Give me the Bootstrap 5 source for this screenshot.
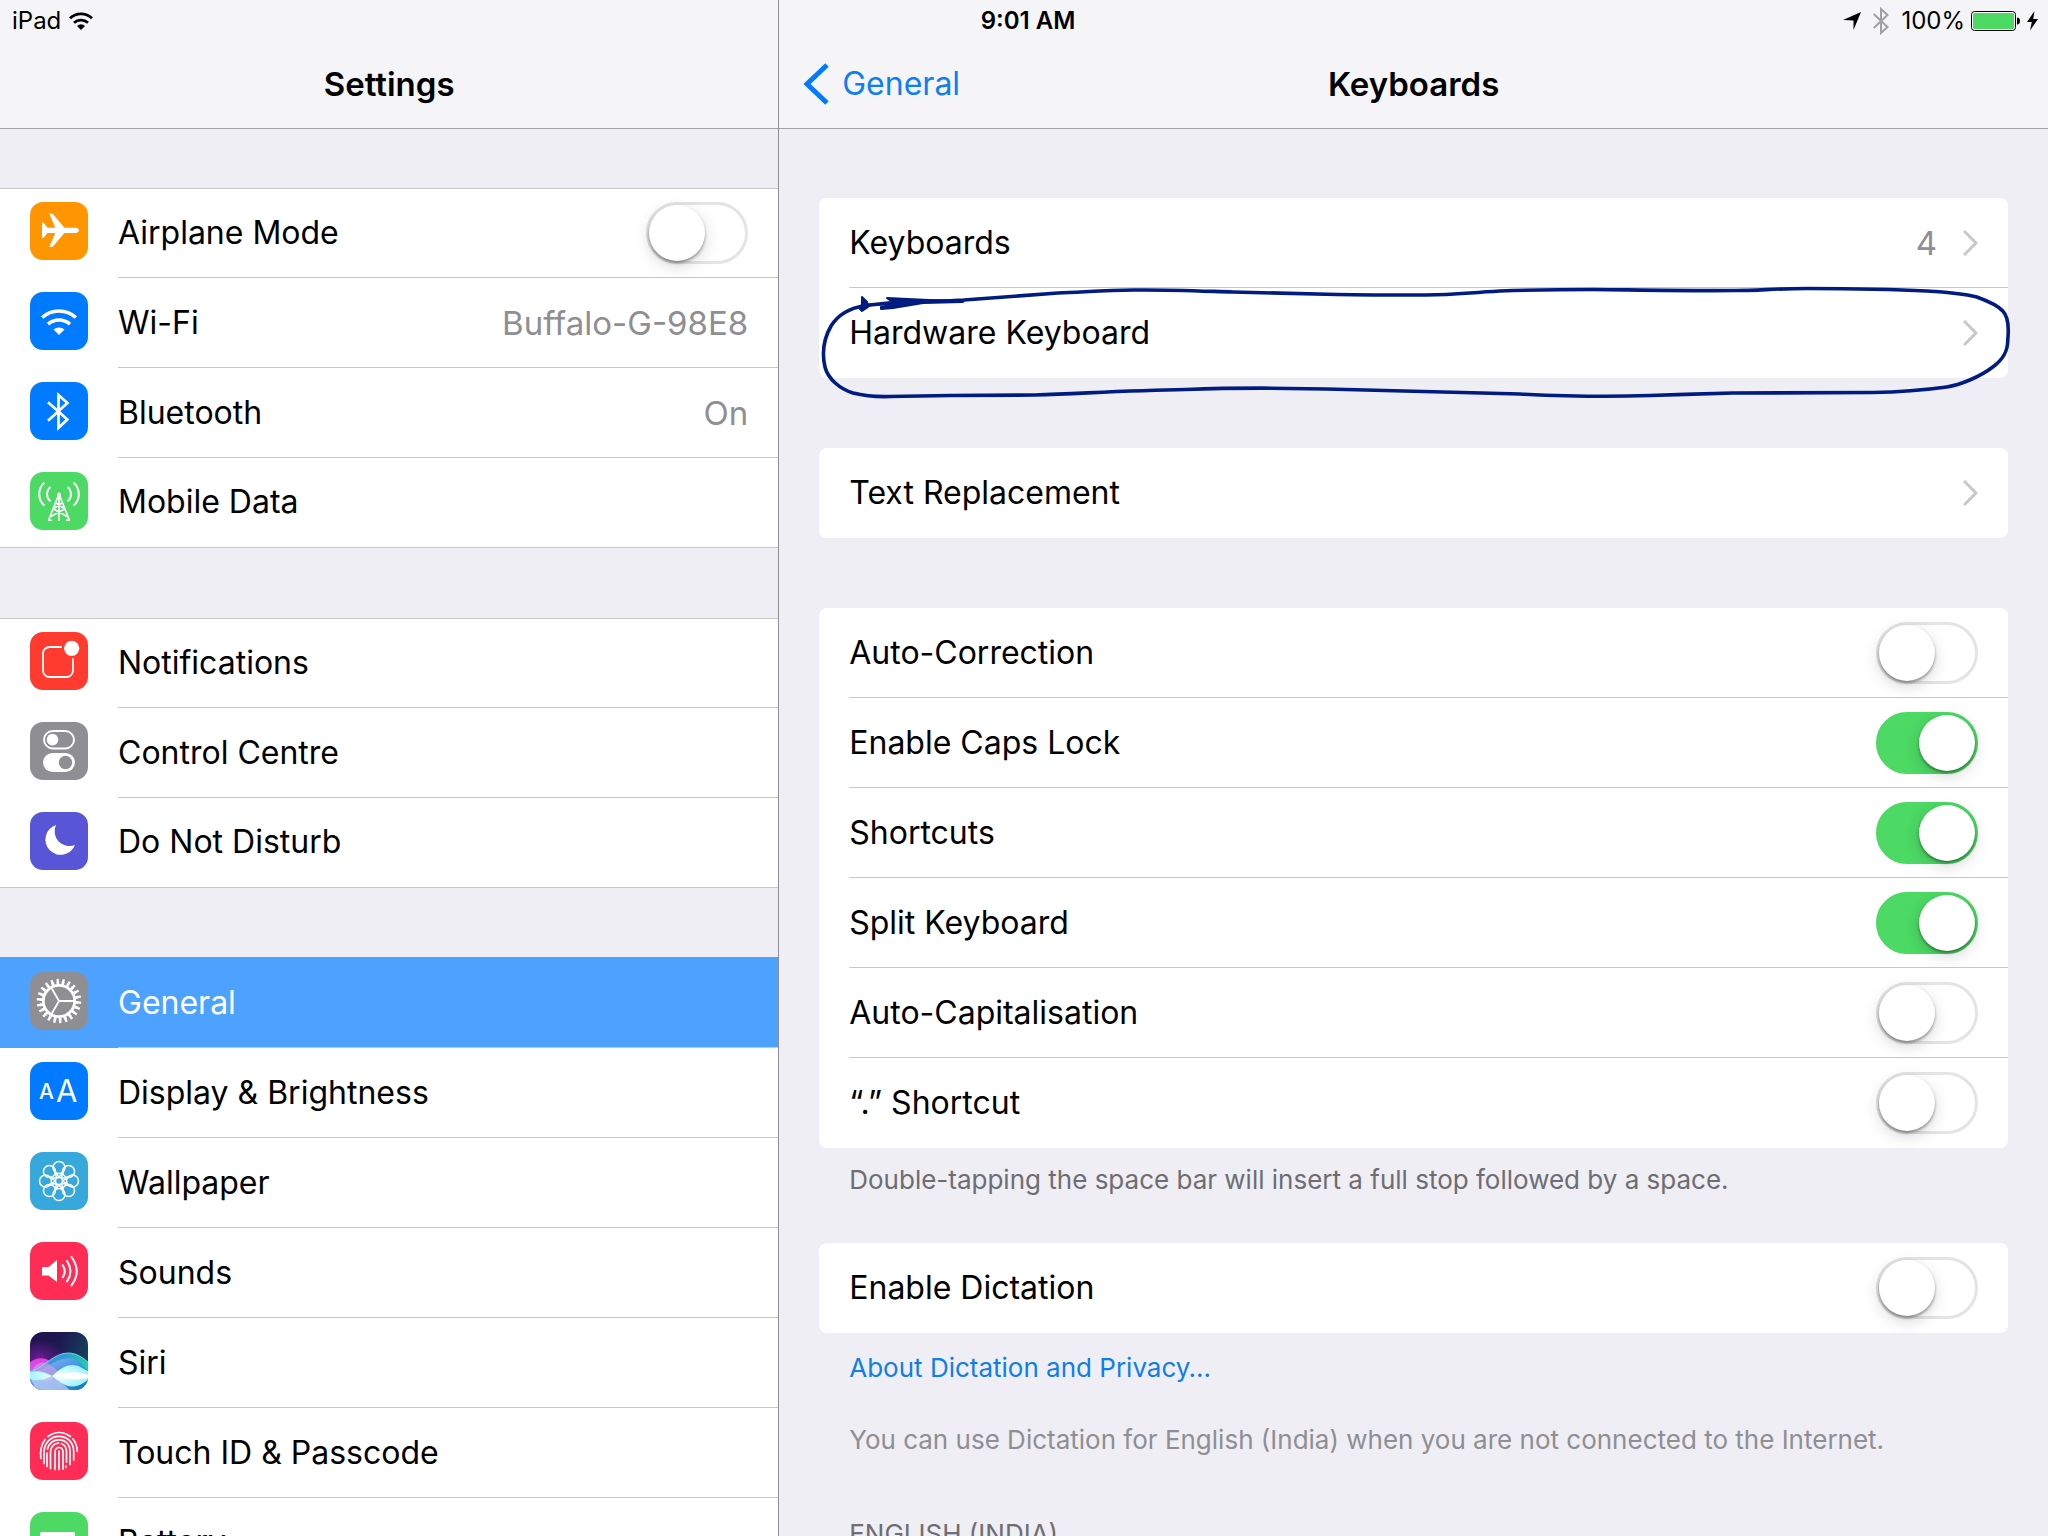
<!DOCTYPE html>
<html lang="en-GB">
<head>
<meta charset="utf-8">
<meta name="viewport" content="width=device-width, initial-scale=1">
<title>Settings – Keyboards</title>
<link href="https://cdn.jsdelivr.net/npm/bootstrap@5.3.0/dist/css/bootstrap.min.css" rel="stylesheet">
<style>
  :root { --line: #c8c7cc; --bar-line: #a1a1a8; --page: #efeef4; --grey: #8e8e93; --blue: #007aff; --green: #4cd964; }
  body { font-family: Inter, "Liberation Sans", sans-serif; font-size: 32px; line-height: 40px; color: #000; background: var(--page); }
  a { text-decoration: none; }

  .status-strip { height: 42px; padding: 0 10px 0 12px; font-size: 24px; line-height: 42px; z-index: 2; }
  .status-side { flex: 1 1 0; }
  .status-time { padding-left: 6px; }
  .status-icons { gap: 12px; }
  .power { gap: 6px; }

  .side-pane { flex: 0 0 calc(38% + 1px); border-right: 1px solid #8f8e94; }
  .title-bar { height: 129px; padding: 40px 24px 0; background: #f5f5f7; border-bottom: 1px solid var(--bar-line); }
  .title-bar h1 { font-size: 33px; line-height: 40px; }
  .title-bar .title-side { flex: 1 1 0; }
  .back-link { display: flex; gap: 12px; color: #0f7ef0; }

  .side-pane .list-group { margin-bottom: 70px; border-top: 1px solid var(--line); border-bottom: 1px solid var(--line); }
  .side-lists { padding-top: 59px; }
  .option { height: 90px; padding: 0 0 0 30px; border: 0; color: #000; background: #fff; display: flex; gap: 30px; }
  .option-body { border-bottom: 1px solid var(--line); padding-right: 30px; }
  .side-pane .option:first-child { height: 89px; }
  .side-pane .option:last-child { height: 89px; }
  .option:last-child .option-body { border-bottom-color: transparent; }
  .side-pane .list-group.no-top { border-top-color: #4da1ff; box-shadow: 0 -1px #4da1ff; }
  .option.active { background: #4da1ff; color: #fff; margin: 0; }
  .option.active .option-body { border-bottom-color: #a9d0ff; }
  .app-tile { width: 58px; height: 58px; flex: none; margin-top: 14px; border-radius: 13px; overflow: hidden; }
  .side-pane .option:first-child .app-tile { margin-top: 13px; }
  .muted { color: var(--grey); }
  .option .muted { font-size: 33px; }

  .card-lists { padding: 69px 40px 0; }
  .option-card { border: 0; border-radius: 9px; position: relative; }
  .next { width: 15px; height: 26px; margin-left: 26px; }
  .gap-large { margin-bottom: 70px; }
  .note { font-size: 26px; line-height: 31px; padding: 16px 0 0 30px; margin: 0; }
  .note-dark { color: #6d6d72; }
  .note-link { padding-top: 19px; }
  .note-link a { color: #0f7ee6; }
  .note-after { padding-top: 41px; }
  .note-heading { padding-top: 63px; }
  .ink { left: 0; top: 0; width: 100%; height: 100%; overflow: visible; pointer-events: none; z-index: 3; }

  .toggle.form-check-input { width: 102px; height: 62px; margin: 0; float: none; position: relative; border: 3px solid #e4e4e4; border-radius: 31px; background: #fff; box-shadow: none; flex: none; }
  .toggle.form-check-input::before { content: ""; position: absolute; left: 0; top: 0; width: 56px; height: 56px; border-radius: 50%; background: #fff; box-shadow: 0 2px 3px rgba(0,0,0,.38), 0 5px 16px rgba(0,0,0,.16); }
  .toggle.form-check-input:checked { background: var(--green); border-color: var(--green); }
  .toggle.form-check-input:checked::before { left: 40px; }
</style>
<script src="https://cdn.jsdelivr.net/npm/bootstrap@5.3.0/dist/js/bootstrap.bundle.min.js"></script>
</head>
<body class="vh-100 overflow-hidden position-relative">

<div class="status-strip position-absolute top-0 start-0 end-0 d-flex align-items-center">
  <div class="status-side d-flex align-items-center">
    <span>iPad</span>
    <svg class="ms-2" width="24" height="18" viewBox="0 0 24 18" aria-hidden="true">
      <path d="M1 6.2A16 16 0 0 1 23 6.2M5 10.8A10.5 10.5 0 0 1 19 10.8" fill="none" stroke="#000" stroke-width="2.8"/>
      <path d="M12 18 8 13.9a5.800 5.800 0 0 1 8 0z"/>
    </svg>
  </div>
  <span class="status-time fw-semibold">9:01 AM</span>
  <div class="status-side d-flex align-items-center justify-content-end status-icons">
    <svg width="18" height="18" viewBox="0 0 18 18" aria-hidden="true"><path d="M18 0 10.500 18V8.400L0 8z"/></svg>
    <svg width="16" height="28" viewBox="0 0 16 28" aria-hidden="true"><path d="M.8 7 14.500 20 8 26V2l6.500 6L.8 21" fill="none" stroke="#a0a0a3" stroke-width="2"/></svg>
    <div class="d-flex align-items-center power">
      <span>100%</span>
      <svg width="50" height="20" viewBox="0 0 50 20" aria-hidden="true">
        <rect x=".5" y=".5" width="44" height="19" rx="3" fill="#fff" stroke="#000"/>
        <rect x="2" y="2" width="41" height="16" rx="1.500" fill="#4cd964"/>
        <path d="M46 6.500c2 0 3 1.500 3 3.500s-1 3.500-3 3.500z"/>
      </svg>
      <svg width="11" height="20" viewBox="0 0 11 20" aria-hidden="true"><path d="M7.500 0 0 11h4.800L3 19.500 11 8H6.200z"/></svg>
    </div>
  </div>
</div>

<div class="d-flex h-100">
  <nav class="side-pane d-flex flex-column overflow-hidden" aria-label="Settings">
    <header class="title-bar d-flex align-items-center justify-content-center flex-shrink-0">
      <h1 class="fw-semibold m-0">Settings</h1>
    </header>
    <div class="side-lists">
      <div class="list-group list-group-flush">
        <div class="list-group-item option">
          <svg class="app-tile" viewBox="0 0 58 58" aria-hidden="true"><rect width="58" height="58" fill="#ff9500"/>
            <path fill="#fff" d="M49 28.300c0 1.500-1.500 2.600-3.500 2.600H34.500L23.300 44c-.6.700-1.100 1-1.900 1h-2.200l6-14.100h-7.700L13.400 36H12V20.600h1.400l4.100 5.100h7.700l-6-14.100h2.200c.8 0 1.300.3 1.900 1l11.200 13.100h11c2 0 3.500 1.100 3.500 2.600z"/></svg>
          <div class="option-body flex-fill d-flex align-items-center justify-content-between">
            <label for="airplane">Airplane Mode</label>
            <input class="form-check-input toggle" type="checkbox" role="switch" id="airplane">
          </div>
        </div>
        <a href="#wifi" class="list-group-item option">
          <svg class="app-tile" viewBox="0 0 58 58" aria-hidden="true"><rect width="58" height="58" fill="#007aff"/>
            <path d="M12.200 25.500a25 25 0 0 1 33.600 0M18 32.200a16.500 16.500 0 0 1 22 0" fill="none" stroke="#fff" stroke-width="3.600"/><path d="M29 43l-5.500-5.500a8.500 8.500 0 0 1 11 0z" fill="#fff"/></svg>
          <div class="option-body flex-fill d-flex align-items-center justify-content-between"><span>Wi-Fi</span><span class="muted">Buffalo-G-98E8</span></div>
        </a>
        <a href="#bluetooth" class="list-group-item option">
          <svg class="app-tile" viewBox="0 0 58 58" aria-hidden="true"><rect width="58" height="58" fill="#007aff"/>
            <path d="M18 20.200 37.400 37.500 28.500 45.800V13l8.900 8L18 38.800" fill="none" stroke="#fff" stroke-width="2.700"/></svg>
          <div class="option-body flex-fill d-flex align-items-center justify-content-between"><span>Bluetooth</span><span class="muted">On</span></div>
        </a>
        <a href="#mobile" class="list-group-item option">
          <svg class="app-tile" viewBox="0 0 58 58" aria-hidden="true"><rect width="58" height="58" fill="#4cd964"/>
            <g fill="none" stroke="#fff"><path stroke-width="2" d="M14.500 10.500c-7 6-7 17.500 0 23M20.500 15c-4.500 3.500-4.500 10.800 0 14.300M43.500 10.500c7 6 7 17.500 0 23M37.500 15c4.500 3.500 4.500 10.800 0 14.300"/>
            <path stroke-width="1.600" d="M28.600 23 18.600 48M29.400 23l10 25M29 22v27M26 31l7.500 5M32 31l-7.500 5M23.500 37 38 45M34.500 37 20 45M18 48.200h4M36 48.200h4"/></g><circle cx="29" cy="22.500" r="2" fill="#fff"/></svg>
          <div class="option-body flex-fill d-flex align-items-center"><span>Mobile Data</span></div>
        </a>
      </div>

      <div class="list-group list-group-flush">
        <a href="#notifications" class="list-group-item option">
          <svg class="app-tile" viewBox="0 0 58 58" aria-hidden="true"><rect width="58" height="58" fill="#ff3b30"/>
            <rect x="13" y="15" width="30" height="30" rx="6.500" fill="none" stroke="#fff" stroke-width="1.800"/><circle cx="41.700" cy="16.300" r="10.300" fill="#ff3b30"/><circle cx="41.700" cy="16.300" r="7.600" fill="#fff"/></svg>
          <div class="option-body flex-fill d-flex align-items-center"><span>Notifications</span></div>
        </a>
        <a href="#control" class="list-group-item option">
          <svg class="app-tile" viewBox="0 0 58 58" aria-hidden="true"><rect width="58" height="58" fill="#8e8e93"/>
            <rect x="14" y="9" width="30" height="17.500" rx="8.750" fill="none" stroke="#fff" stroke-width="1.900"/><circle cx="22.500" cy="17.600" r="5.800" fill="#fff"/>
            <rect x="13" y="31" width="32" height="19" rx="9.500" fill="#fff"/><circle cx="35.500" cy="40.500" r="6.700" fill="#8e8e93"/></svg>
          <div class="option-body flex-fill d-flex align-items-center"><span>Control Centre</span></div>
        </a>
        <a href="#dnd" class="list-group-item option">
          <svg class="app-tile" viewBox="0 0 58 58" aria-hidden="true"><rect width="58" height="58" fill="#5856d6"/>
            <path fill="#fff" d="M26 13A15.300 15.300 0 1 0 45 33 14.800 14.800 0 0 1 26 13z"/></svg>
          <div class="option-body flex-fill d-flex align-items-center"><span>Do Not Disturb</span></div>
        </a>
      </div>

      <div class="list-group list-group-flush no-top">
        <a href="#general" class="list-group-item option active" aria-current="page">
          <svg class="app-tile" viewBox="0 0 58 58" aria-hidden="true"><rect width="58" height="58" fill="#8e8e93"/>
            <g fill="none" stroke="#fff"><circle cx="29" cy="29" r="15.700" stroke-width="2.800"/>
            <circle cx="29" cy="29" r="18" stroke-width="3" pathLength="44" stroke-dasharray="1.100 .9"/><circle cx="29" cy="29" r="20.500" stroke-width="3.500" pathLength="44" stroke-dasharray=".8 1.200" stroke-dashoffset="-.15"/>
            <path stroke-width="1.800" d="M29 29h15M29 29l-7.500-13M29 29l-7.500 13"/></g></svg>
          <div class="option-body flex-fill d-flex align-items-center"><span>General</span></div>
        </a>
        <a href="#display" class="list-group-item option">
          <svg class="app-tile" viewBox="0 0 58 58" aria-hidden="true"><rect width="58" height="58" fill="#007aff"/>
            <text x="9" y="37" font-family="Inter, sans-serif" font-size="21" font-weight="500" fill="#fff">A</text><text x="26" y="40" font-family="Inter, sans-serif" font-size="31" fill="#fff">A</text></svg>
          <div class="option-body flex-fill d-flex align-items-center"><span>Display &amp; Brightness</span></div>
        </a>
        <a href="#wallpaper" class="list-group-item option">
          <svg class="app-tile" viewBox="0 0 58 58" aria-hidden="true"><rect width="58" height="58" fill="#36a8dc"/>
            <defs><g id="petal"><circle cx="29" cy="15.500" r="6"/><path d="M29 25.300 24.300 19M29 25.300 33.700 19"/></g></defs>
            <g fill="none" stroke="#fff" stroke-width="1.500"><use href="#petal"/><use href="#petal" transform="rotate(45 29 29)"/><use href="#petal" transform="rotate(90 29 29)"/><use href="#petal" transform="rotate(135 29 29)"/><use href="#petal" transform="rotate(180 29 29)"/><use href="#petal" transform="rotate(225 29 29)"/><use href="#petal" transform="rotate(270 29 29)"/><use href="#petal" transform="rotate(315 29 29)"/><circle cx="29" cy="29" r="3.500"/></g></svg>
          <div class="option-body flex-fill d-flex align-items-center"><span>Wallpaper</span></div>
        </a>
        <a href="#sounds" class="list-group-item option">
          <svg class="app-tile" viewBox="0 0 58 58" aria-hidden="true"><rect width="58" height="58" fill="#ff2d55"/>
            <path fill="#fff" d="M12 25h6.500L27 18v22l-8.500-6.500H12z"/><path fill="none" stroke="#fff" stroke-width="2" stroke-linecap="round" d="M32.800 23.200q4 6 0 12M37 19q7 10.200 0 20.400M41.500 15q10.500 14.200 0 28.400"/></svg>
          <div class="option-body flex-fill d-flex align-items-center"><span>Sounds</span></div>
        </a>
        <a href="#siri" class="list-group-item option">
          <svg class="app-tile" viewBox="0 0 58 58" aria-hidden="true">
            <defs>
              <linearGradient id="sky" x2="1" y2=".35"><stop stop-color="#25104f"/><stop offset=".5" stop-color="#1d1850"/><stop offset="1" stop-color="#17405f"/></linearGradient>
              <linearGradient id="pink" x2="0" y2="1"><stop stop-color="#e838e0"/><stop offset="1" stop-color="#8fa6f0"/></linearGradient>
              <linearGradient id="teal" x2="1"><stop stop-color="#5a8ee8"/><stop offset=".6" stop-color="#2a9bd8"/><stop offset="1" stop-color="#1fd0a8"/></linearGradient>
              <linearGradient id="deep" x2="1" y2="1"><stop stop-color="#b5b4f5"/><stop offset=".45" stop-color="#4a9be6"/><stop offset="1" stop-color="#1277bd"/></linearGradient>
              <radialGradient id="glow"><stop stop-color="#fff"/><stop offset="1" stop-color="#a4f4fb"/></radialGradient>
              <radialGradient id="haze"><stop stop-color="#7a1fa0" stop-opacity=".8"/><stop offset="1" stop-color="#7a1fa0" stop-opacity="0"/></radialGradient>
            </defs>
            <rect width="58" height="58" fill="url(#sky)"/><ellipse cx="10" cy="26" rx="26" ry="18" fill="url(#haze)"/>
            <path fill="url(#pink)" d="M0 30C8 24 18 25 26 34L58 58H0z"/>
            <path fill="url(#teal)" d="M0 40C16 34 24 21 38 21c9 0 15 5 20 9v28H0z"/>
            <path fill="url(#deep)" d="M0 40C14 40 24 27 38 26c9 0 14 7 20 13v19H0z"/>
            <path fill="#d99be8" opacity=".6" d="M4 35C12 27 20 30 30 42L16 50 0 44z"/>
            <path fill="none" stroke="#7fe9f2" stroke-width=".8" d="M0 40C16 34 24 21 38 21c9 0 15 5 20 9"/>
            <path fill="#cfd0fb" opacity=".7" d="M0 45c8 6 14 3 22-1 8 4 12 9 18 14H6z"/>
            <path fill="url(#glow)" d="M0 40c8-2 15 0 22 4-7 4-14 6-22 3zM22 44c8-7 13-11 20-11s11 4 16 6v9c-5 3-9 6.500-16 6.500S30 50 22 44z"/>
            <path fill="#fff" d="M28 44q15-7 30-1v3q-15 4-30-2z"/></svg>
          <div class="option-body flex-fill d-flex align-items-center"><span>Siri</span></div>
        </a>
        <a href="#touchid" class="list-group-item option">
          <svg class="app-tile" viewBox="0 0 58 58" aria-hidden="true"><rect width="58" height="58" fill="#ff2d55"/>
            <g fill="none" stroke="#fff" stroke-width="1.700" stroke-linecap="round">
              <path d="M18 14.500Q29 6.500 40.500 14.500M10.800 36.500Q9.500 25 15 17.500M43 17Q47 22 47.300 29.500"/>
              <path d="M14 41.500V32C13.500 22 20 14.300 29 14.300c8 0 14 5.500 14.700 14.200V38"/>
              <path d="M17 44.500V31M17.500 27C19.500 20 24 17.800 29 17.800c6.500 0 11 4.700 11 11.700v13"/>
              <path d="M20.500 46.500V30c0-5 3.500-8.800 8-8.800M31.500 21.700c3.500 1.100 5 4.200 5 8.300v10M36 44l-.3 1.500"/>
              <path d="M25 47.500V30.500c0-3 1.700-5 4-5s4 2 4 5V47"/>
              <path d="M29 29v18.500"/></g></svg>
          <div class="option-body flex-fill d-flex align-items-center"><span>Touch ID &amp; Passcode</span></div>
        </a>
        <a href="#battery" class="list-group-item option">
          <svg class="app-tile" viewBox="0 0 58 58" aria-hidden="true"><rect width="58" height="58" fill="#4cd964"/><rect x="10" y="20" width="35" height="18" rx="1.500" fill="#fff"/><path d="M46.500 26c2 0 3 1.200 3 3s-1 3-3 3z" fill="#fff"/></svg>
          <div class="option-body flex-fill d-flex align-items-center"><span>Battery</span></div>
        </a>
      </div>
    </div>
  </nav>

  <main class="flex-fill d-flex flex-column overflow-hidden">
    <header class="title-bar d-flex align-items-center flex-shrink-0">
      <div class="title-side d-flex"><a href="#general" class="back-link align-items-center">
        <svg width="27" height="42" viewBox="0 0 27 42" aria-hidden="true"><path d="M24 2 4 21l20 19" fill="none" stroke="#007aff" stroke-width="5"/></svg>General</a></div>
      <h1 class="fw-semibold m-0">Keyboards</h1>
      <div class="title-side"></div>
    </header>

    <div class="card-lists">
      <div class="card option-card gap-large">
        <div class="list-group list-group-flush rounded-3">
          <a href="#keyboards" class="list-group-item option"><div class="option-body flex-fill d-flex align-items-center"><span class="me-auto">Keyboards</span><span class="muted">4</span>
            <svg class="next" viewBox="0 0 15 26" aria-hidden="true"><path d="M1 1l12 12L1 25" fill="none" stroke="#c7c7cc" stroke-width="3"/></svg></div></a>
          <a href="#hardware" class="list-group-item option"><div class="option-body flex-fill d-flex align-items-center"><span class="me-auto">Hardware Keyboard</span>
            <svg class="next" viewBox="0 0 15 26" aria-hidden="true"><path d="M1 1l12 12L1 25" fill="none" stroke="#c7c7cc" stroke-width="3"/></svg></div></a>
        </div>
        <!-- Pen ring drawn round the Hardware Keyboard row -->
        <svg class="ink position-absolute" viewBox="819 198 1189 180" preserveAspectRatio="none" aria-hidden="true">
          <path fill="none" stroke="#001c80" stroke-width="3.600" stroke-linecap="round" stroke-linejoin="round" d="M964 300C935 302 890 301 864 306C850 308 838 315 831 326C823 340 822 354 825 367C828 379 840 389 853 393C865 396 875 397 890 396.500L950 395.500L1035 395C1090 393 1130 390.500 1186 389.500C1240 387.500 1280 387.500 1346 389.500L1520 394C1560 396 1610 397 1650 395.500C1680 394.500 1700 394 1733 393L1873 392.500C1905 392 1925 390 1947 387C1960 385 1980 377 1993 367C2004 359 2008 351 2008 340C2009 330 2009 317 2003 311C1998 305 1988 301 1977 297C1965 294 1945 292 1927 291C1890 289 1855 288.500 1807 288.500C1775 288.500 1760 290.500 1735 290.500C1690 291 1640 290 1594 289.500C1550 289.500 1530 290 1500 291C1465 293 1455 295 1426 295C1390 295 1365 295 1337 294.500L1233 292C1200 291 1165 289.500 1134 290C1105 290 1085 292 1058 293L964 300"/>
          <path fill="#001c80" stroke="#001c80" stroke-width="2" stroke-linejoin="round" d="M887 298l42 2 34 1v1l-40 1-30 5-12 1v-2l14-3zM862 297l5 5 1 5-6 4-2-2 2-5z"/>
        </svg>
      </div>

      <div class="card option-card gap-large">
        <div class="list-group list-group-flush rounded-3">
          <a href="#replacement" class="list-group-item option"><div class="option-body flex-fill d-flex align-items-center"><span class="me-auto">Text Replacement</span>
            <svg class="next" viewBox="0 0 15 26" aria-hidden="true"><path d="M1 1l12 12L1 25" fill="none" stroke="#c7c7cc" stroke-width="3"/></svg></div></a>
        </div>
      </div>

      <div class="card option-card">
        <div class="list-group list-group-flush rounded-3">
          <div class="list-group-item option"><div class="option-body flex-fill d-flex align-items-center justify-content-between"><label for="autocorrect">Auto-Correction</label><input class="form-check-input toggle" type="checkbox" role="switch" id="autocorrect"></div></div>
          <div class="list-group-item option"><div class="option-body flex-fill d-flex align-items-center justify-content-between"><label for="caps">Enable Caps Lock</label><input class="form-check-input toggle" type="checkbox" role="switch" id="caps" checked></div></div>
          <div class="list-group-item option"><div class="option-body flex-fill d-flex align-items-center justify-content-between"><label for="shortcuts">Shortcuts</label><input class="form-check-input toggle" type="checkbox" role="switch" id="shortcuts" checked></div></div>
          <div class="list-group-item option"><div class="option-body flex-fill d-flex align-items-center justify-content-between"><label for="split">Split Keyboard</label><input class="form-check-input toggle" type="checkbox" role="switch" id="split" checked></div></div>
          <div class="list-group-item option"><div class="option-body flex-fill d-flex align-items-center justify-content-between"><label for="autocap">Auto-Capitalisation</label><input class="form-check-input toggle" type="checkbox" role="switch" id="autocap"></div></div>
          <div class="list-group-item option"><div class="option-body flex-fill d-flex align-items-center justify-content-between"><label for="fullstop">“.” Shortcut</label><input class="form-check-input toggle" type="checkbox" role="switch" id="fullstop"></div></div>
        </div>
      </div>
      <p class="note note-dark">Double-tapping the space bar will insert a full stop followed by a space.</p>

      <div class="card option-card mt-5">
        <div class="list-group list-group-flush rounded-3">
          <div class="list-group-item option"><div class="option-body flex-fill d-flex align-items-center justify-content-between"><label for="dictation">Enable Dictation</label><input class="form-check-input toggle" type="checkbox" role="switch" id="dictation"></div></div>
        </div>
      </div>
      <p class="note note-link"><a href="#privacy">About Dictation and Privacy…</a></p>
      <p class="note note-after muted">You can use Dictation for English (India) when you are not connected to the Internet.</p>
      <h2 class="note note-heading note-dark fw-normal">ENGLISH (INDIA)</h2>
    </div>
  </main>
</div>
</body>
</html>
